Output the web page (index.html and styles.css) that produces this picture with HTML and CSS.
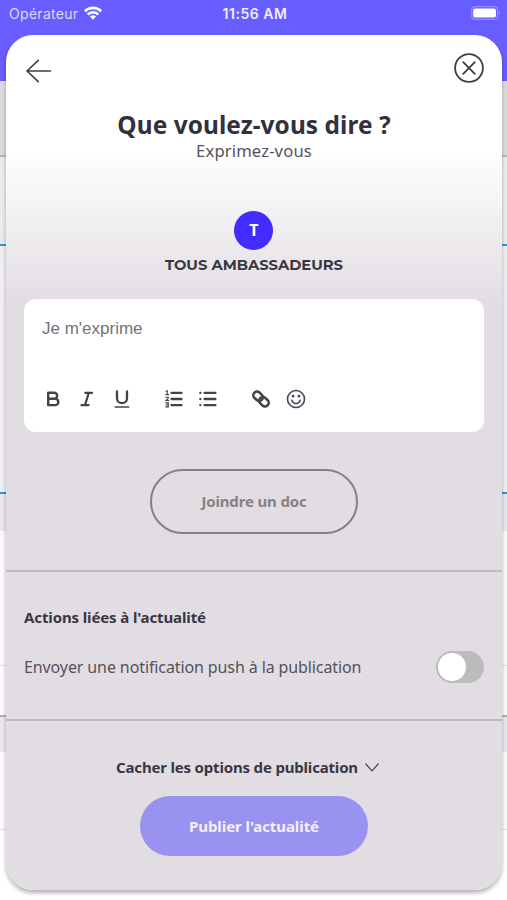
FILE: index.html
```html
<!DOCTYPE html>
<html lang="fr">
<head>
    <meta charset="UTF-8">
    <meta name="viewport" content="width=device-width, initial-scale=1.0">
    <title>Que voulez-vous dire ?</title>
    <link rel="stylesheet" href="styles.css">
</head>
<body>
    <!-- feed behind the modal -->
    <div class="feed">
        <header class="status-bar">
            <div class="carrier">
                <span class="carrier-name">Opérateur</span>
                <svg width="18" height="14" viewBox="0 0 18 14" fill="none" stroke="#fff" stroke-width="2.6">
                    <path d="M.8 5.2C5.5 .7 12.5 .7 17.2 5.2"/>
                    <path d="M3.7 8.5C6.8 5.6 11.2 5.6 14.3 8.5"/>
                    <path d="M6 10.6Q9 8.1 12 10.6L9 13.7Z" fill="#fff" stroke="none"/>
                </svg>
            </div>
            <span class="time">11:56 AM</span>
            <svg class="battery" width="30" height="14" viewBox="0 0 30 14">
                <rect x=".7" y=".7" width="26" height="12.6" rx="3.5" fill="none" stroke="#958dff" stroke-width="1.2"/>
                <rect x="2.2" y="2.4" width="22.8" height="9.2" rx="2" fill="#fff"/>
                <path d="M28 5v4c1.6-.6 1.6-3.4 0-4z" fill="#958dff"/>
            </svg>
        </header>
        <div class="feed-tabs"></div>
        <div class="feed-filter"></div>
        <div class="feed-post"></div>
        <div class="feed-gap"></div>
        <div class="feed-card"></div>
        <div class="feed-actions"></div>
        <div class="feed-gap short"></div>
        <div class="feed-card last"></div>
    </div>

    <main class="modal">
        <nav class="modal-nav">
            <button class="icon-button back" aria-label="Retour">
                <svg width="26" height="24" viewBox="0 0 26 24" fill="none" stroke="#3f3b48" stroke-width="1.6" stroke-linecap="round" stroke-linejoin="round">
                    <path d="M24.5 12H1M12.2 1.4L1 12l11.2 10.6"/>
                </svg>
            </button>
            <button class="icon-button" aria-label="Fermer">
                <svg width="30" height="30" viewBox="0 0 30 30" fill="none" stroke="#3f3b48" stroke-width="1.8" stroke-linecap="round">
                    <circle cx="15" cy="15" r="13.9"/>
                    <path d="M9.2 9.2l11.6 11.6M20.8 9.2L9.2 20.8"/>
                </svg>
            </button>
        </nav>

        <h1>Que voulez-vous dire ?</h1>
        <p class="subtitle">Exprimez-vous</p>

        <div class="group">
            <span class="avatar">T</span>
            <span class="group-name">TOUS AMBASSADEURS</span>
        </div>

        <section class="editor">
            <div class="placeholder">Je m'exprime</div>
            <div class="toolbar">
                <svg width="18" height="18" viewBox="0 0 18 18" fill="none" stroke="#444" stroke-width="2.4" stroke-linejoin="round">
                    <path d="M4.2 2.8h6a3 3 0 0 1 0 6H4.2zM4.2 8.8h7a3.1 3.1 0 0 1 0 6.3H4.2z"/>
                </svg>
                <svg width="18" height="18" viewBox="0 0 18 18" fill="none" stroke="#444" stroke-width="2.2" stroke-linecap="round">
                    <path d="M7.3 2.8h6.8M3.4 15.1h7.2M10.8 2.8L7 15.1"/>
                </svg>
                <svg width="18" height="18" viewBox="0 0 18 18" fill="none" stroke="#444" stroke-width="2.3" stroke-linecap="round">
                    <path d="M4 1.4v6.8a5 5 0 0 0 10 0V1.4"/>
                    <path d="M2.2 17h13.6" stroke-width="1.3"/>
                </svg>
                <svg class="list" width="18" height="18" viewBox="0 0 18 18" fill="none" stroke="#444" stroke-width="2.3" stroke-linecap="round">
                    <path d="M6.5 2.9h10M6.5 9h10M6.5 15.2h10"/>
                    <path d="M1 1.3l1.2-.6v3.9M.8 4.6h2.8M.8 7.2h2.4v1.2L.9 10.5h2.7M.8 12.9h2.5v4H.8M1.3 14.9h2" stroke-width="1.1"/>
                </svg>
                <svg width="18" height="18" viewBox="0 0 18 18" fill="none" stroke="#444" stroke-width="2.3" stroke-linecap="round">
                    <path d="M5.6 2.9h10.8M5.6 9h10.8M5.6 15.2h10.8"/>
                    <path d="M1.3 2.9h.1M1.3 9h.1M1.3 15.2h.1"/>
                </svg>
                <svg class="link" width="18" height="18" viewBox="0 0 18 18" fill="none" stroke="#444" stroke-width="2.5">
                    <rect x=".9" y="2.6" width="10.4" height="7.4" rx="3.7" transform="rotate(42 6.1 6.3)"/>
                    <rect x="6.7" y="8" width="10.4" height="7.4" rx="3.7" transform="rotate(42 11.9 11.7)"/>
                </svg>
                <svg width="20" height="20" viewBox="0 0 20 20" fill="none" stroke="#444855" stroke-width="1.6" stroke-linecap="round">
                    <circle cx="10" cy="10" r="8.5"/>
                    <path d="M6 11.4a4.1 4.1 0 0 0 8 0"/>
                    <circle cx="7.1" cy="7.2" r=".6" fill="#444855"/>
                    <circle cx="12.9" cy="7.2" r=".6" fill="#444855"/>
                </svg>
            </div>
        </section>

        <button class="attach">Joindre un doc</button>

        <section class="options">
            <h2>Actions liées à l'actualité</h2>
            <div class="option-row">
                <span>Envoyer une notification push à la publication</span>
                <div class="switch"><div class="knob"></div></div>
            </div>
        </section>

        <div class="toggle-options">
            <span>Cacher les options de publication</span>
            <svg width="14" height="9" viewBox="0 0 14 9" fill="none" stroke="#4a4652" stroke-width="1.2" stroke-linecap="round" stroke-linejoin="round">
                <path d="M.8 1L7 7.8 13.2 1"/>
            </svg>
        </div>
        <button class="publish">Publier l'actualité</button>
    </main>
</body>
</html>
```
FILE: styles.css
```css
* {
    box-sizing: border-box;
}
body {
    margin: 0;
    width: 507px;
    height: 900px;
    position: relative;
    overflow: hidden;
    font-family: 'Noto Sans', sans-serif;
    color: #3a3745;
    background: #fff;
}
svg {
    display: block;
    flex: none;
}
button {
    font-family: inherit;
    border: none;
    padding: 0;
    cursor: pointer;
}

/* feed */
.feed {
    display: flex;
    flex-direction: column;
    height: 900px;
}
.status-bar {
    height: 81px;
    flex: none;
    padding: 6px 6px 0 9px;
    display: grid;
    grid-template-columns: 1fr auto 1fr;
    align-items: start;
    background: #685dff;
    color: #fff;
    font-family: Inter, sans-serif;
    font-size: 14px;
    line-height: 16px;
}
.carrier {
    display: flex;
    gap: 6px;
}
.carrier-name {
    color: #dedbff;
    letter-spacing: 0.3px;
}
.time {
    font-weight: 600;
    color: #f0eeff;
    letter-spacing: 0.55px;
}
.battery {
    justify-self: end;
}
.feed-tabs {
    height: 76px;
    background: #dedbdf;
    border-bottom: 2px solid #b9b7bb;
}
.feed-filter {
    height: 89px;
    background: #ececee;
    border-bottom: 2px solid #229ddb;
}
.feed-post {
    height: 248px;
    background: #f0f0f2;
    border-bottom: 2px solid #229ddb;
}
.feed-gap {
    height: 37px;
    background: #e9e9eb;
}
.feed-card {
    height: 135px;
    background: #fbfbfb;
    border-bottom: 1px solid #e0e0e2;
}
.feed-actions {
    height: 51px;
    background: #fbfbfb;
    border-bottom: 2px solid #b0afb2;
}
.feed-gap.short {
    height: 35px;
}
.feed-card.last {
    height: 78px;
}

/* modal */
.modal {
    position: absolute;
    top: 35px;
    left: 6px;
    width: 496px;
    height: 855px;
    border-radius: 27px;
    background: linear-gradient(#fff 0, #fff 115px, #e2dde3 268px);
    box-shadow: 0 3px 4px rgba(0, 0, 0, 0.3);
    display: flex;
    flex-direction: column;
    align-items: center;
}
.modal-nav {
    width: 100%;
    padding: 18px 18px 0 20px;
    display: flex;
    justify-content: space-between;
}
.icon-button {
    background: none;
}
.icon-button.back {
    padding-top: 5px;
}
h1 {
    margin: 26px 0 0;
    font-size: 24.4px;
    line-height: 32px;
    letter-spacing: 0.07px;
    color: #34313f;
}
.subtitle {
    margin: 0;
    font-size: 16.6px;
    line-height: 20px;
    letter-spacing: 0.15px;
    color: #55525c;
}
.group {
    margin-top: 50px;
    display: flex;
    flex-direction: column;
    align-items: center;
}
.avatar {
    width: 39px;
    height: 39px;
    border-radius: 50%;
    background: #432cff;
    color: #fff;
    font-size: 16px;
    font-weight: 700;
    line-height: 38px;
    text-align: center;
}
.group-name {
    margin-top: 6px;
    font-family: Montserrat, Inter, sans-serif;
    font-size: 14.7px;
    font-weight: 700;
    line-height: 19px;
}
.editor {
    width: 460px;
    height: 133px;
    margin-top: 24px;
    padding: 20px 18px 0;
    border-radius: 12px;
    background: #fff;
}
.placeholder {
    font-family: 'Liberation Sans', Arial, sans-serif;
    font-size: 17px;
    line-height: 20px;
    color: #747474;
}
.toolbar {
    margin: 50px 0 0 2px;
    height: 20px;
    display: flex;
    align-items: center;
    gap: 16.3px;
}
.toolbar .list {
    margin-left: 18px;
}
.toolbar .link {
    margin-left: 18.5px;
}
.attach {
    width: 208px;
    height: 65px;
    margin-top: 37px;
    padding-bottom: 1px;
    border: 2px solid #868187;
    border-radius: 33px;
    background: transparent;
    color: #868187;
    font-size: 15px;
    font-weight: 700;
    letter-spacing: -0.15px;
}
.options {
    width: 100%;
    height: 151px;
    margin-top: 36px;
    padding: 35px 18px 0;
    border-top: 2px solid #c0bbc1;
    border-bottom: 2px solid #c0bbc1;
}
h2 {
    margin: 0;
    font-size: 15px;
    line-height: 20px;
    letter-spacing: -0.12px;
}
.option-row {
    margin-top: 24px;
    display: flex;
    justify-content: space-between;
    align-items: center;
    font-size: 16px;
    letter-spacing: -0.11px;
    color: #55525c;
}
.switch {
    width: 48px;
    height: 32px;
    padding: 2px;
    border-radius: 16px;
    background: #bcbcbc;
}
.knob {
    width: 28px;
    height: 28px;
    border-radius: 50%;
    background: #fff;
}
.toggle-options {
    margin: 35px 13px 0 0;
    display: flex;
    align-items: center;
    gap: 7px;
    font-size: 15px;
    font-weight: 700;
    line-height: 22px;
    letter-spacing: -0.18px;
}
.publish {
    width: 228px;
    height: 60px;
    margin-top: 18px;
    border-radius: 30px;
    background: #9a92f0;
    color: #f3f0ff;
    font-size: 15px;
    font-weight: 700;
    letter-spacing: -0.07px;
}
```
